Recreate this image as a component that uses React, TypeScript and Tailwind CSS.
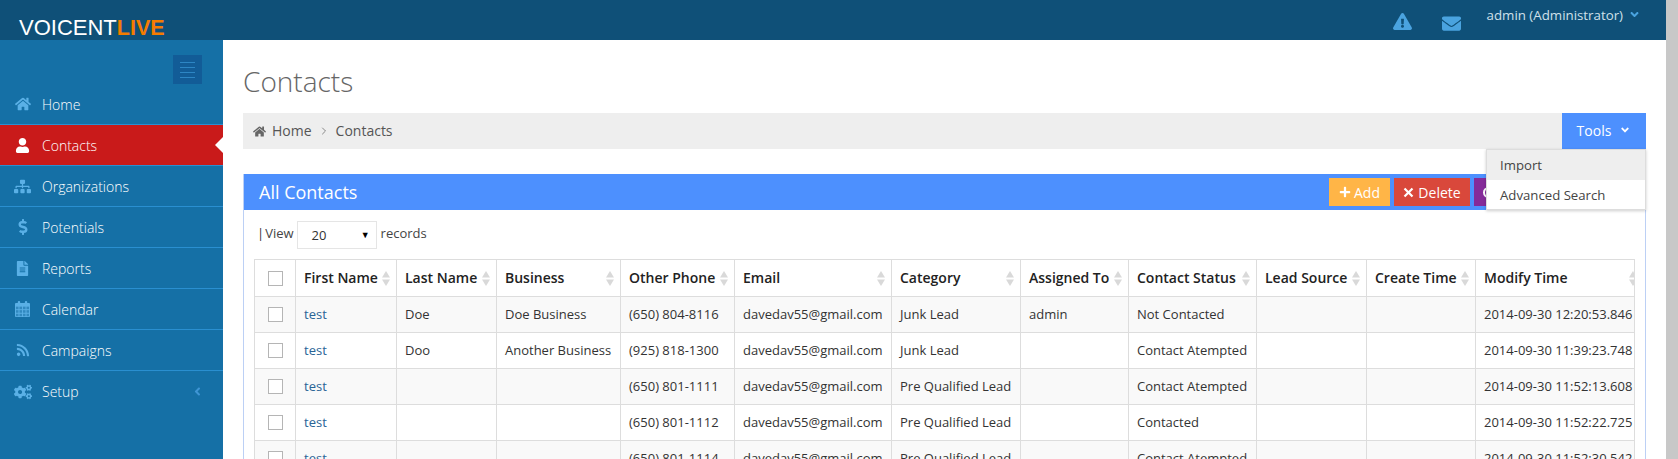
import React from "react";
import { FaHome, FaUser, FaSitemap, FaDollarSign, FaFileAlt, FaRss, FaCogs, FaExclamationTriangle, FaEnvelope, FaAngleDown, FaAngleLeft, FaPlus } from "react-icons/fa";
import { ChevronRight } from "lucide-react";

function CalendarIcon({ size = 16 }: { size?: number }) {
  const xs = [1, 4.75, 8.5, 12.25];
  const ys = [6, 9.75, 13.5];
  return (
    <svg width={size} height={size + 1} viewBox="0 0 16 17" fill="currentColor">
      <rect x="0" y="2" width="16" height="15" rx="1" />
      <rect x="3" y="0" width="2.5" height="4.5" rx="1" />
      <rect x="10.5" y="0" width="2.5" height="4.5" rx="1" />
      {ys.map((y) =>
        xs.map((x) => <rect key={`${x}-${y}`} x={x} y={y} width="2.75" height="2.75" fill="#1570a6" fillOpacity="0.6" />)
      )}
    </svg>
  );
}

function TimesIcon() {
  return (
    <svg width="11" height="11" viewBox="0 0 12 12" fill="currentColor">
      <path d="M2.5.8 6 4.3 9.5.8l1.7 1.7L7.7 6l3.5 3.5-1.7 1.7L6 7.7l-3.5 3.5-1.7-1.7L4.3 6 .8 2.5z" />
    </svg>
  );
}

const nav = [
  { label: "Home", Icon: FaHome, size: 16 },
  { label: "Contacts", Icon: FaUser, size: 15, active: true },
  { label: "Organizations", Icon: FaSitemap, size: 17 },
  { label: "Potentials", Icon: FaDollarSign, size: 16 },
  { label: "Reports", Icon: FaFileAlt, size: 15 },
  { label: "Calendar", Icon: CalendarIcon, size: 15 },
  { label: "Campaigns", Icon: FaRss, size: 14 },
  { label: "Setup", Icon: FaCogs, size: 18, caret: true },
];

const cols = [
  { t: "", w: 41 },
  { t: "First Name", w: 101 },
  { t: "Last Name", w: 100 },
  { t: "Business", w: 124 },
  { t: "Other Phone", w: 114 },
  { t: "Email", w: 157 },
  { t: "Category", w: 129 },
  { t: "Assigned To", w: 108 },
  { t: "Contact Status", w: 128 },
  { t: "Lead Source", w: 110 },
  { t: "Create Time", w: 109 },
  { t: "Modify Time", w: 159 },
];

const rows = [
  ["Doe", "Doe Business", "(650) 804-8116", "Junk Lead", "admin", "Not Contacted", "2014-09-30 12:20:53.846"],
  ["Doo", "Another Business", "(925) 818-1300", "Junk Lead", "", "Contact Atempted", "2014-09-30 11:39:23.748"],
  ["", "", "(650) 801-1111", "Pre Qualified Lead", "", "Contact Atempted", "2014-09-30 11:52:13.608"],
  ["", "", "(650) 801-1112", "Pre Qualified Lead", "", "Contacted", "2014-09-30 11:52:22.725"],
  ["", "", "(650) 801-1114", "Pre Qualified Lead", "", "Contact Atempted", "2014-09-30 11:52:30.542"],
];

function SortArrows({ className = "" }: { className?: string }) {
  return (
    <svg width="8" height="15" viewBox="0 0 8 15" className={`shrink-0 ${className}`} fill="#d9d9d9">
      <path d="M4 0 8 6.5H0z" />
      <path d="M4 15 8 8.5H0z" />
    </svg>
  );
}

function Check() {
  return <div className="w-[15px] h-[15px] border border-[#b5b5b5] bg-white mx-auto" />;
}

function Cell({ children, className = "pl-2 text-[#333333]" }: { children?: React.ReactNode; className?: string }) {
  return <td className={`border border-[#dddddd] h-9 whitespace-nowrap overflow-hidden text-[13px] ${className}`}>{children}</td>;
}

export default function App() {
  return (
    <div className="flex h-[459px] w-[1678px] overflow-hidden bg-white font-['Open_Sans',sans-serif]">
      <div className="flex flex-col flex-1 min-w-0">
        <header className="h-10 shrink-0 bg-[#0f5078] flex">
          <div className="w-[223px] shrink-0 pl-[19px] pt-[18px] font-['Liberation_Sans',sans-serif] text-[22px] leading-[20px] text-white">
            VOICENT<span className="text-[#f57c00] font-bold text-[21.5px]">LIVE</span>
          </div>
          <div className="flex-1 flex justify-end pr-[25px]">
            <FaExclamationTriangle className="text-[#4aa3df] mt-3 mr-[30px]" size={19} />
            <FaEnvelope className="text-[#4aa3df] mt-[14px] mr-[26px]" size={19} />
            <span className="text-[13.3px] text-[#cfe0ea] mt-[5px] leading-[20px]">admin (Administrator)</span>
            <FaAngleDown className="text-[#4aa3df] ml-[5px] mt-[8px]" size={13} />
          </div>
        </header>
        <div className="flex flex-1 min-h-0">
          <aside className="w-[223px] shrink-0 bg-[#1570a6] flex flex-col">
            <div className="h-11 flex justify-end pr-[21px] pt-[15px]">
              <div className="w-[29px] h-[29px] bg-[#125c97] flex flex-col justify-center items-center gap-[4px]">
                <div className="w-[15px] h-px bg-[#2d86c4]" />
                <div className="w-[15px] h-px bg-[#2d86c4]" />
                <div className="w-[15px] h-px bg-[#2d86c4]" />
                <div className="w-[15px] h-px bg-[#2d86c4]" />
              </div>
            </div>
            {nav.map(({ label, Icon, size, active, caret }, i) => (
              <div
                key={label}
                className={`relative h-[41px] shrink-0 flex items-center text-white ${active ? "bg-[#c91a1a]" : ""} ${i < nav.length - 1 ? "border-b border-[#2a8fd0]" : ""}`}
              >
                <span className={`w-[42px] shrink-0 flex justify-center pl-[3px] ${active ? "text-white" : "text-[#5ab0e6]"}`}>
                  <Icon size={size} />
                </span>
                <span className="text-[14px] font-light">{label}</span>
                {caret && <FaAngleLeft className="absolute right-[19px] text-[#3f95d4]" size={13} />}
                {active && <span className="absolute right-0 top-1/2 -translate-y-1/2 w-0 h-0 border-y-[8px] border-y-transparent border-r-[8px] border-r-white" />}
              </div>
            ))}
          </aside>
          <main className="flex-1 min-w-0 pl-[20px] pr-[20px]">
            <h1 className="text-[28px] font-light text-[#666666] leading-[38px] mt-[22px] mb-[13px] h-[38px]">Contacts</h1>
            <div className="relative h-9 bg-[#eeeeee] flex items-center text-[14px] text-[#555555]">
              <FaHome className="ml-[10px] mr-[6px] text-[#666666]" size={13} />
              <span className="pb-[2px]">Home</span>
              <ChevronRight className="mx-[6px] text-[#666666]" size={12} strokeWidth={1.5} />
              <span className="pb-[2px]">Contacts</span>
              <div className="ml-auto w-[84px] h-9 bg-[#4d90fe] text-white flex items-center justify-center gap-2 pb-[2px]">
                <span>Tools</span>
                <FaAngleDown size={12} />
              </div>
              <div className="absolute z-10 right-0 top-9 w-[160px] h-[61px] bg-white border border-[#dddddd] shadow-[0_1px_3px_rgba(0,0,0,0.2)] text-[13.2px] text-[#444444]">
                <div className="h-[30px] bg-[#eeeeee] pl-[13px] pt-[2px] flex items-center">Import</div>
                <div className="h-[30px] pl-[13px] pt-[2px] flex items-center">Advanced Search</div>
              </div>
            </div>
            <section className="mt-[25px] border-x border-[#bcd0f5] px-[10px] -mb-px">
              <div className="-mx-[10px] h-9 bg-[#4d90fe] flex items-center pl-[15px] text-white">
                <span className="text-[18px]">All Contacts</span>
                <div className="ml-auto flex gap-1 text-[14px] mr-[82px]">
                  <div className="w-[61px] h-7 bg-[#ffb547] flex items-center justify-center gap-[3px]"><FaPlus size={12} />Add</div>
                  <div className="w-[76px] h-7 bg-[#d9483b] flex items-center justify-center gap-[4px]"><TimesIcon />Delete</div>
                  <div className="w-[89px] h-7 bg-[#852b99] flex items-center pl-[9px]">
                    <div className="w-[11px] h-[11px] rounded-full border-2 border-white" />
                  </div>
                </div>
              </div>
              <div className="h-[49px] flex items-center text-[13px] text-[#444444] pl-[3px] pb-[1px]">
                <span className="text-[#333333]">|</span>
                <span className="ml-[1px]">View</span>
                <div className="ml-[3px] self-start mt-[11px] w-[80px] h-7 border border-[#e5e5e5] flex items-center pl-[14px] pr-[6px] justify-between text-[#333333]">
                  <span className="pt-[2px]">20</span>
                  <span className="text-[9px] text-black">▼</span>
                </div>
                <span className="ml-1">records</span>
              </div>
              <table className="table-fixed border-collapse w-[1381px]">
                <colgroup>
                  {cols.map((c, i) => (
                    <col key={i} style={{ width: c.w }} />
                  ))}
                </colgroup>
                <thead>
                  <tr>
                    {cols.map((c, i) => (
                      <th key={i} className={`border border-[#dddddd] h-[37px] text-left font-semibold text-[14px] text-[#222222] overflow-hidden ${i === 0 ? "px-0" : i === 11 ? "pl-2 pr-0" : "pl-2 pr-[6px]"}`}>
                        {i === 0 ? (
                          <Check />
                        ) : (
                          <div className="flex items-center justify-between whitespace-nowrap">
                            <span className="pb-[2px]">{c.t}</span>
                            <SortArrows className={i === 11 ? "-mr-[3px]" : ""} />
                          </div>
                        )}
                      </th>
                    ))}
                  </tr>
                </thead>
                <tbody>
                  {rows.map((r, i) => (
                    <tr key={i} className={i % 2 === 0 ? "bg-[#f9f9f9]" : "bg-white"}>
                      <Cell className="px-0"><Check /></Cell>
                      <Cell className="pl-2 text-[#2a6496]">test</Cell>
                      <Cell>{r[0]}</Cell>
                      <Cell>{r[1]}</Cell>
                      <Cell>{r[2]}</Cell>
                      <Cell>davedav55@gmail.com</Cell>
                      <Cell>{r[3]}</Cell>
                      <Cell>{r[4]}</Cell>
                      <Cell>{r[5]}</Cell>
                      <Cell />
                      <Cell />
                      <Cell>{r[6]}</Cell>
                    </tr>
                  ))}
                </tbody>
              </table>
            </section>
          </main>
        </div>
      </div>
      <div className="w-3 shrink-0 bg-[#c8c8c8]" />
    </div>
  );
}
